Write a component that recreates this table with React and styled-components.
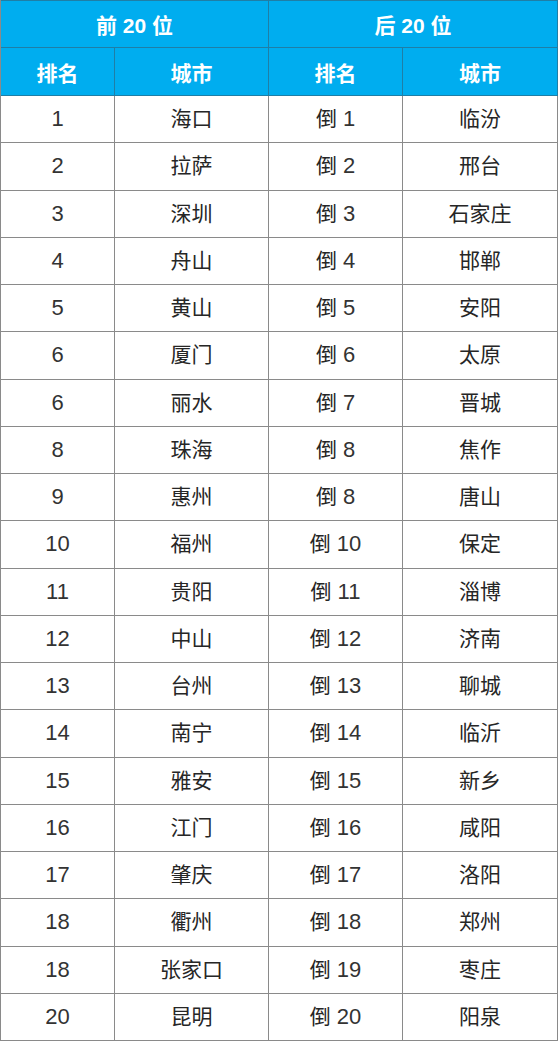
import React from "react";
import styled, { createGlobalStyle } from "styled-components";

const GlobalStyle = createGlobalStyle`
  body {
    margin: 0;
    background: #fff;
    font-family: "Liberation Sans", "Noto Sans CJK SC", sans-serif;
  }
`;

const Table = styled.div`
  display: grid;
  grid-template-columns: 114px 154px 134px 155px;
  grid-template-rows: 48px 48px repeat(20, 47.25px);
  width: 557px;
  border-left: 1px solid #8a8a8a;
  box-sizing: border-box;
`;

const HeadBase = styled.div`
  display: flex;
  align-items: center;
  justify-content: center;
  background: #00adef;
  color: #fff;
  font-size: 21px;
  font-weight: bold;
  border-right: 1px solid #1f7ea6;
  border-bottom: 1px solid #1f7ea6;
  box-sizing: border-box;
`;

const GroupHead = styled(HeadBase)`
  grid-column: span 2;
  border-top: 1px solid #1f7ea6;
`;

const ColHead = styled(HeadBase)``;

const Cell = styled.div`
  display: flex;
  align-items: center;
  justify-content: center;
  color: #262626;
  border-right: 1px solid #8a8a8a;
  border-bottom: 1px solid #8a8a8a;
  box-sizing: border-box;
`;

const Text = styled.span`
  font-size: 21px;
  line-height: 24px;
  white-space: nowrap;
`;

const Num = styled.span`
  font-size: 22px;
  color: #333;
  margin-left: ${({ $gap }) => ($gap ? "6px" : "0")};
`;

const top = [
  ["1", "海口"], ["2", "拉萨"], ["3", "深圳"], ["4", "舟山"], ["5", "黄山"],
  ["6", "厦门"], ["6", "丽水"], ["8", "珠海"], ["9", "惠州"], ["10", "福州"],
  ["11", "贵阳"], ["12", "中山"], ["13", "台州"], ["14", "南宁"], ["15", "雅安"],
  ["16", "江门"], ["17", "肇庆"], ["18", "衢州"], ["18", "张家口"], ["20", "昆明"],
];

const bottom = [
  ["1", "临汾"], ["2", "邢台"], ["3", "石家庄"], ["4", "邯郸"], ["5", "安阳"],
  ["6", "太原"], ["7", "晋城"], ["8", "焦作"], ["8", "唐山"], ["10", "保定"],
  ["11", "淄博"], ["12", "济南"], ["13", "聊城"], ["14", "临沂"], ["15", "新乡"],
  ["16", "咸阳"], ["17", "洛阳"], ["18", "郑州"], ["19", "枣庄"], ["20", "阳泉"],
];

const App = () => (
  <>
    <GlobalStyle />
    <Table>
      <GroupHead>前 20 位</GroupHead>
      <GroupHead>后 20 位</GroupHead>
      <ColHead>排名</ColHead>
      <ColHead>城市</ColHead>
      <ColHead>排名</ColHead>
      <ColHead>城市</ColHead>
      {top.map(([rank, city], i) => (
        <React.Fragment key={i}>
          <Cell><Text><Num>{rank}</Num></Text></Cell>
          <Cell><Text>{city}</Text></Cell>
          <Cell><Text>倒<Num $gap>{bottom[i][0]}</Num></Text></Cell>
          <Cell><Text>{bottom[i][1]}</Text></Cell>
        </React.Fragment>
      ))}
    </Table>
  </>
);

export default App;
